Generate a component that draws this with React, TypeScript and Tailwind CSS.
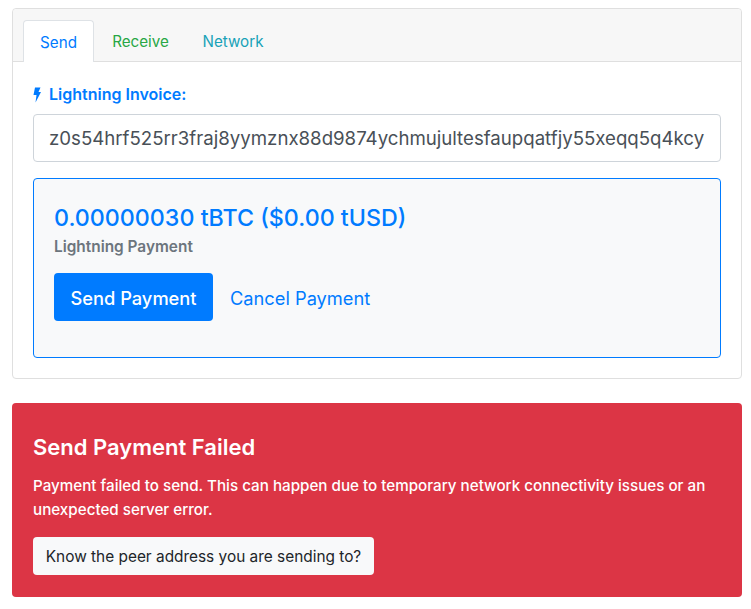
import React from "react";

export default function App() {
  return (
    <div className="min-h-[609px] bg-white pt-2 pl-3 pr-[9px] font-['Inter','Noto_Sans',sans-serif] text-[16px] leading-6 text-[#212529]">
      <div className="rounded border border-[#dfdfdf] bg-white">
        <div className="flex h-[53px] items-end rounded-t border-b border-[#dfdfdf] bg-[#f7f7f7] pl-[10px] text-[15.2px]">
          <div className="-mb-px flex h-[42px] w-[71px] items-center justify-center rounded-t border border-b-0 border-[#dee2e6] bg-white pt-[2px] text-[#007bff]">Send</div>
          <div className="flex h-[41px] w-[93px] items-center justify-center pt-[2px] text-[#28a745]">Receive</div>
          <div className="flex h-[41px] w-[90px] items-center justify-center pt-[2px] pl-[2px] text-[15.2px] text-[#17a2b8]">Network</div>
        </div>
        <div className="px-5 pt-5 pb-5">
          <div className="flex h-6 items-center gap-[7px] text-[16px] font-semibold text-[#007bff]">
            <svg width="9" height="18" viewBox="0 0 9 18" className="shrink-0" fill="currentColor">
              <path d="M2 2.5H7.5L5.5 7H8L2.5 17.5L3.5 10H.5z" />
            </svg>
            <span>Lightning Invoice:</span>
          </div>
          <div className="mt-2 flex h-12 items-center overflow-hidden rounded border border-[#ced4da] bg-white px-[15px] text-[18.65px] whitespace-nowrap text-[#495057]">
            z0s54hrf525rr3fraj8yymznx88d9874ychmujultesfaupqatfjy55xeqq5q4kcy
          </div>
          <div className="mt-4 h-[180px] rounded border border-[#007bff] bg-[#f8f9fa] px-5 pt-5">
            <div className="h-[38px] -mt-px pt-px text-[23.25px] leading-[38px] font-medium text-[#007bff]">0.00000030 tBTC ($0.00 tUSD)</div>
            <div className="text-[15.4px] leading-[21px] font-semibold text-[#6c757d]">Lightning Payment</div>
            <div className="mt-4 flex items-center gap-[17px]">
              <div className="flex h-12 w-[159px] items-center justify-center rounded bg-[#007bff] pt-px text-[18.3px] font-medium text-white">Send Payment</div>
              <div className="pt-px text-[18.25px] text-[#007bff]">Cancel Payment</div>
            </div>
          </div>
        </div>
      </div>
      <div className="mt-6 h-[194px] rounded bg-[#dc3545] px-[21px] pt-[29px] text-white">
        <div className="text-[22px] leading-[30px] font-semibold">Send Payment Failed</div>
        <div className="mt-3 text-[15.2px] leading-[24px] font-medium">
          Payment failed to send. This can happen due to temporary network connectivity issues or an unexpected server error.
        </div>
        <div className="mt-[15px] flex h-[38px] w-[341px] items-center justify-center rounded bg-[#f8f9fa] pt-[2px] text-[15.4px] text-[#212529]">Know the peer address you are sending to?</div>
      </div>
    </div>
  );
}
